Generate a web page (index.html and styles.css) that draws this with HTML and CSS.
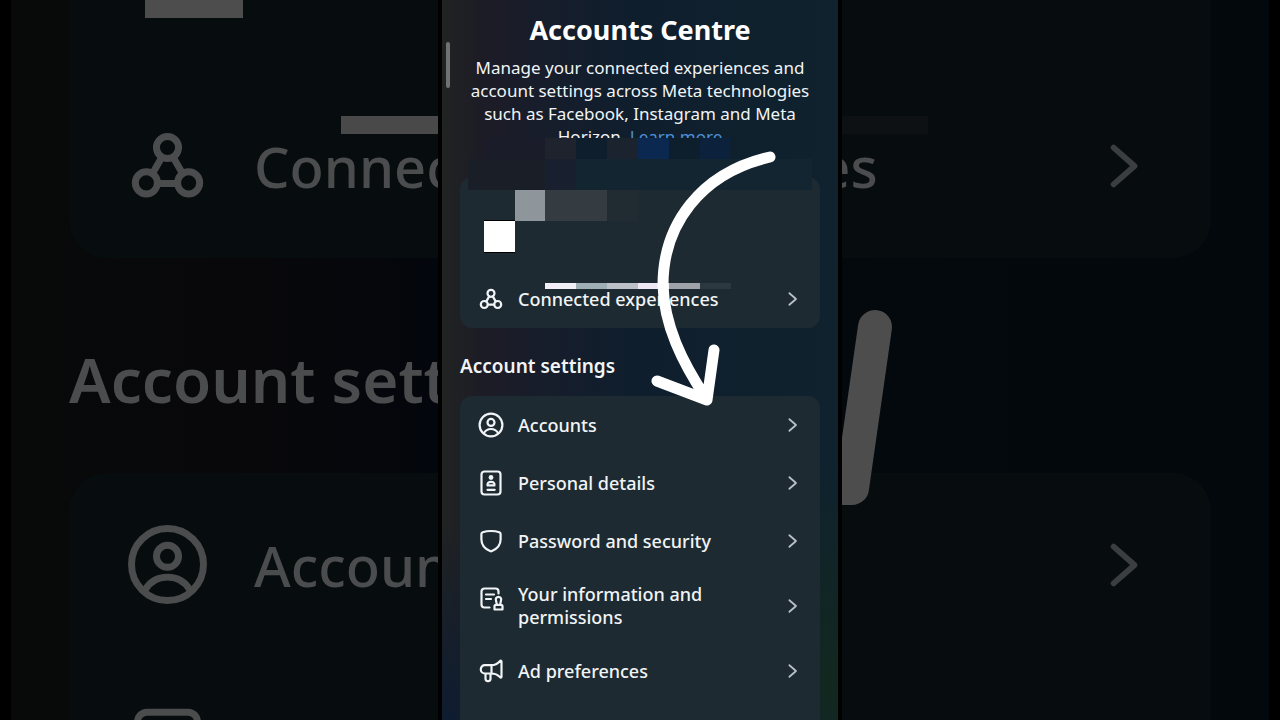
FILE: index.html
```html
<!DOCTYPE html>
<html lang="en">
<head>
  <meta charset="UTF-8" />
  <meta name="viewport" content="width=device-width, initial-scale=1.0" />
  <title>Accounts Centre</title>
  <link rel="stylesheet" href="styles.css">
</head>
<body>
  <svg class="sprite" aria-hidden="true">
    <symbol id="i-connected" viewBox="0 0 32 32">
      <circle cx="16" cy="10.300" r="3.500" /><circle cx="9.300" cy="21.500" r="3.500" /><circle cx="22.700" cy="21.500" r="3.500" />
      <path d="M14.200 13.400l-3 5.200M17.800 13.400l3 5.200M12.800 21.700h6.400" />
    </symbol>
    <symbol id="i-account" viewBox="0 0 32 32">
      <circle cx="16" cy="16" r="11.400" /><circle cx="16" cy="13.400" r="3.500" />
      <path d="M8.800 24.200c1.600-2.800 4.200-4.200 7.200-4.200s5.600 1.400 7.200 4.200" />
    </symbol>
    <symbol id="i-details" viewBox="0 0 32 32">
      <rect x="6.500" y="4.500" width="19" height="23" rx="3" />
      <circle cx="16" cy="10.500" r="2.400" class="solid" />
      <path d="M12.600 18.400c-.6-2.400 1-3.600 3.400-3.600s4 1.200 3.400 3.600zM12.500 22.800h7.200" />
    </symbol>
    <symbol id="i-shield" viewBox="0 0 32 32">
      <path d="M16 6c3.200 0 6.200.500 8.300 1.200.900.300 1.300 1 1.300 1.800v5.500c0 5.400-4 9.500-8.700 11.600-.6.300-1.200.300-1.800 0-4.700-2.100-8.700-6.200-8.700-11.600V9c0-.800.400-1.500 1.300-1.800C9.800 6.500 12.800 6 16 6z" />
    </symbol>
    <symbol id="i-info" viewBox="0 0 32 32">
      <path d="M14.500 24.500H9.500a3 3 0 0 1-3-3V8.500a3 3 0 0 1 3-3h11a3 3 0 0 1 3 3v2M11 11.500h8M11 16h5" />
      <path d="M21.800 21.500l-.8-4a2.700 2.700 0 1 1 5 0l-.8 4M19.500 26.500v-3.200a1.500 1.500 0 0 1 1.500-1.500h5a1.500 1.500 0 0 1 1.500 1.500v3.200z" />
    </symbol>
    <symbol id="i-ads" viewBox="0 0 32 32">
      <path d="M16.500 10.200H9.800a4 4 0 0 0-4 4v.3a4 4 0 0 0 4 4h6.700c3.500 0 6.500 1.600 8.700 3.800.6.600 1.300.200 1.300-.6V6.500c0-.800-.8-1.200-1.400-.600-2.400 2.600-5.100 4.300-8.600 4.300zM16.500 10.200v8.300M10.500 18.500v5.300a2.300 2.300 0 0 0 2.300 2.300h.4a2.300 2.300 0 0 0 2.300-2.300v-5.300" />
    </symbol>
    <symbol id="i-chevron" viewBox="0 0 24 24">
      <path d="M8.400 6.200l6.600 5.800-6.600 5.800" />
    </symbol>
  </svg>

  <div class="stage">
    <!-- enlarged, dimmed copy behind the phone -->
    <div class="backdrop" aria-hidden="true">
      <div class="card card-top">
        <div class="row">
          <svg class="icon"><use href="#i-connected" /></svg>
          <span class="label">Connected experiences</span>
          <svg class="chevron"><use href="#i-chevron" /></svg>
        </div>
      </div>
      <div class="section-title">Account settings</div>
      <div class="card card-list">
        <div class="row">
          <svg class="icon"><use href="#i-account" /></svg>
          <span class="label">Accounts</span>
          <svg class="chevron"><use href="#i-chevron" /></svg>
        </div>
        <div class="row">
          <svg class="icon"><use href="#i-details" /></svg>
        </div>
      </div>
      <svg class="overlay" viewBox="11 0 1258 720">
        <path fill="#4d4d4d" d="M145 0h98v18h-98z" />
        <path fill="#494949" d="M341 116h97v18h-97z" />
        <path fill="#0e1114" d="M842 116h86v18h-86z" />
        <path class="stroke-dim" d="M875 327l-23 161h-20" />
      </svg>
    </div>

    <main class="phone">
      <header class="header">
        <h1>Accounts Centre</h1>
        <p>Manage your connected experiences and account settings across Meta technologies such as Facebook, Instagram and Meta Horizon. <a href="#">Learn more</a></p>
      </header>

      <section class="card card-top">
        <a class="row" href="#">
          <svg class="icon"><use href="#i-connected" /></svg>
          <span class="label">Connected experiences</span>
          <svg class="chevron"><use href="#i-chevron" /></svg>
        </a>
      </section>

      <h2 class="section-title">Account settings</h2>
      <nav class="card card-list">
        <a class="row" href="#">
          <svg class="icon"><use href="#i-account" /></svg>
          <span class="label">Accounts</span>
          <svg class="chevron"><use href="#i-chevron" /></svg>
        </a>
        <a class="row" href="#">
          <svg class="icon"><use href="#i-details" /></svg>
          <span class="label">Personal details</span>
          <svg class="chevron"><use href="#i-chevron" /></svg>
        </a>
        <a class="row" href="#">
          <svg class="icon"><use href="#i-shield" /></svg>
          <span class="label">Password and security</span>
          <svg class="chevron"><use href="#i-chevron" /></svg>
        </a>
        <a class="row" href="#">
          <svg class="icon"><use href="#i-info" /></svg>
          <span class="label">Your information and permissions</span>
          <svg class="chevron"><use href="#i-chevron" /></svg>
        </a>
        <a class="row" href="#">
          <svg class="icon"><use href="#i-ads" /></svg>
          <span class="label">Ad preferences</span>
          <svg class="chevron"><use href="#i-chevron" /></svg>
        </a>
      </nav>

      <!-- mosaic blocks, scroll mark and arrow -->
      <svg class="overlay" viewBox="442 0 396 720" aria-hidden="true">
        <rect x="446" y="42" width="4" height="46" rx="2" fill="#6f7173" />
        <g shape-rendering="crispEdges">
          <path fill="#1b1c2a" d="M484 138h61v21h-61z" />
          <path fill="#1f232d" d="M545 138h31v21h-31z" />
          <path fill="#0e1e2d" d="M576 138h31v21h-31z" />
          <path fill="#1b232e" d="M607 138h31v21h-31z" />
          <path fill="#0b2850" d="M638 138h31v21h-31z" />
          <path fill="#0d1f2c" d="M669 138h31v21h-31z" />
          <path fill="#0c213c" d="M700 138h30v21h-30z" />
          <path fill="#1a1e27" d="M468 159h77v31h-77z" />
          <path fill="#182030" d="M545 159h31v31h-31z" />
          <path fill="#142532" d="M576 159h236v31H576z" />
          <path fill="#8f969b" d="M515 190h30v31h-30z" />
          <path fill="#343b41" d="M545 190h62v31h-62z" />
          <path fill="#202c32" d="M607 190h31v31h-31z" />
          <path fill="#000" d="M484 220h31v33h-31z" />
          <path fill="#fff" d="M484 221h31v31h-31z" />
          <path fill="#f1eff5" d="M545 283h31v6h-31z" />
          <path fill="#9fadb4" d="M576 283h31v6h-31z" />
          <path fill="#bcc1c7" d="M607 283h31v6h-31z" />
          <path fill="#eee8f2" d="M638 283h31v6h-31z" />
          <path fill="#9da3a9" d="M669 283h31v6h-31z" />
          <path fill="#2c383f" d="M700 283h31v6h-31z" />
        </g>
        <path class="arrow" d="M770 157C700 173 663 225 663 285C664 325 682 362 706 398M657 381L707 400L714 350" />
      </svg>
    </main>
  </div>
</body>
</html>
```
FILE: styles.css
```css
* {
  box-sizing: border-box;
}

body {
  margin: 0;
  background: #000;
  font-family: "Noto Sans", "Open Sans", sans-serif;
}

h1,
h2,
p {
  margin: 0;
}

.sprite {
  position: absolute;
  width: 0;
  height: 0;
}

.stage {
  display: grid;
  grid-template-rows: 100vh;
  justify-items: center;
  overflow: hidden;
}

.backdrop,
.phone {
  grid-area: 1 / 1;
  position: relative;
  display: flex;
  flex-direction: column;
  overflow: hidden;
}

.card {
  display: flex;
  flex-direction: column;
  flex-shrink: 0;
}

.card-top {
  justify-content: flex-end;
}

.row {
  display: flex;
  align-items: center;
  color: inherit;
  text-decoration: none;
}

.label {
  flex: 1;
}

.icon,
.chevron {
  flex-shrink: 0;
  fill: none;
  stroke: currentColor;
  stroke-width: 2.2;
  stroke-linecap: round;
  stroke-linejoin: round;
}

.icon {
  align-self: flex-start;
}

.chevron {
  stroke-width: 1.8;
}

.solid {
  fill: currentColor;
  stroke: none;
}

.overlay {
  position: absolute;
  top: 0;
  left: 0;
  width: 100%;
  pointer-events: none;
}

/* backdrop */
.backdrop {
  justify-self: stretch;
  margin: 0 11px;
  padding: 0 58px;
  color: #4b4c4d;
  background: linear-gradient(90deg, #080909 0, #08080b 20%, #03060c 34%, #03090d 70%, #03080c 100%);
}

.backdrop .card {
  background: #070d0f;
}

.backdrop .card-top {
  min-height: 258px;
  border-radius: 0 0 38px 38px;
}

.backdrop .card-list {
  border-radius: 38px;
}

.backdrop .row {
  min-height: 184px;
  padding: 41px 48px;
  gap: 36px;
  font-size: 56px;
  line-height: 72px;
  font-weight: 500;
  white-space: nowrap;
}

.backdrop .icon {
  width: 101px;
  height: 101px;
}

.backdrop .chevron {
  width: 76px;
  height: 76px;
  color: #3b3e40;
}

.backdrop .section-title {
  margin: 76px 0 49px;
  font-size: 62px;
  line-height: 90px;
  font-weight: 600;
}

.stroke-dim {
  fill: none;
  stroke: #4d4d4d;
  stroke-width: 34;
  stroke-linecap: round;
  stroke-linejoin: round;
}

/* phone */
.phone {
  width: 100%;
  max-width: 404px;
  padding: 0 18px;
  border: solid #000;
  border-width: 0 4px;
  color: #f1f4f6;
  background:
    radial-gradient(circle at 100% 95%, #12281f 0, rgba(18, 40, 31, 0) 220px),
    radial-gradient(circle at 0 100%, #0e1c30 0, rgba(14, 28, 48, 0) 200px),
    linear-gradient(90deg, #212322 0, #1d1c26 10%, #171d2b 25%, #0f1e2d 48%, #0f222e 100%);
}

.header {
  padding-top: 14px;
  text-align: center;
}

.header h1 {
  margin-bottom: 10px;
  font-size: 27px;
  line-height: 32px;
  font-weight: 700;
  color: #fff;
}

.header p {
  font-size: 17px;
  line-height: 23px;
}

.header a {
  color: #4a90d9;
  text-decoration: none;
}

.phone .card {
  background: #1d2a31;
  border-radius: 12px;
}

.phone .card-top {
  min-height: 151px;
  margin-top: 29px;
}

.phone .card-list {
  flex-grow: 1;
  border-radius: 12px 12px 0 0;
}

.phone .row {
  min-height: 58px;
  padding: 13px 15px;
  gap: 11px;
  font-size: 18px;
  line-height: 23px;
  font-weight: 500;
}

.phone .icon {
  width: 32px;
  height: 32px;
}

.phone .chevron {
  width: 24px;
  height: 24px;
  color: #b8c0c5;
}

.phone .section-title {
  margin: 24px 0 16px;
  font-size: 19px;
  line-height: 28px;
  font-weight: 600;
}

.arrow {
  fill: none;
  stroke: #fff;
  stroke-width: 11;
  stroke-linecap: round;
  stroke-linejoin: round;
}
```
